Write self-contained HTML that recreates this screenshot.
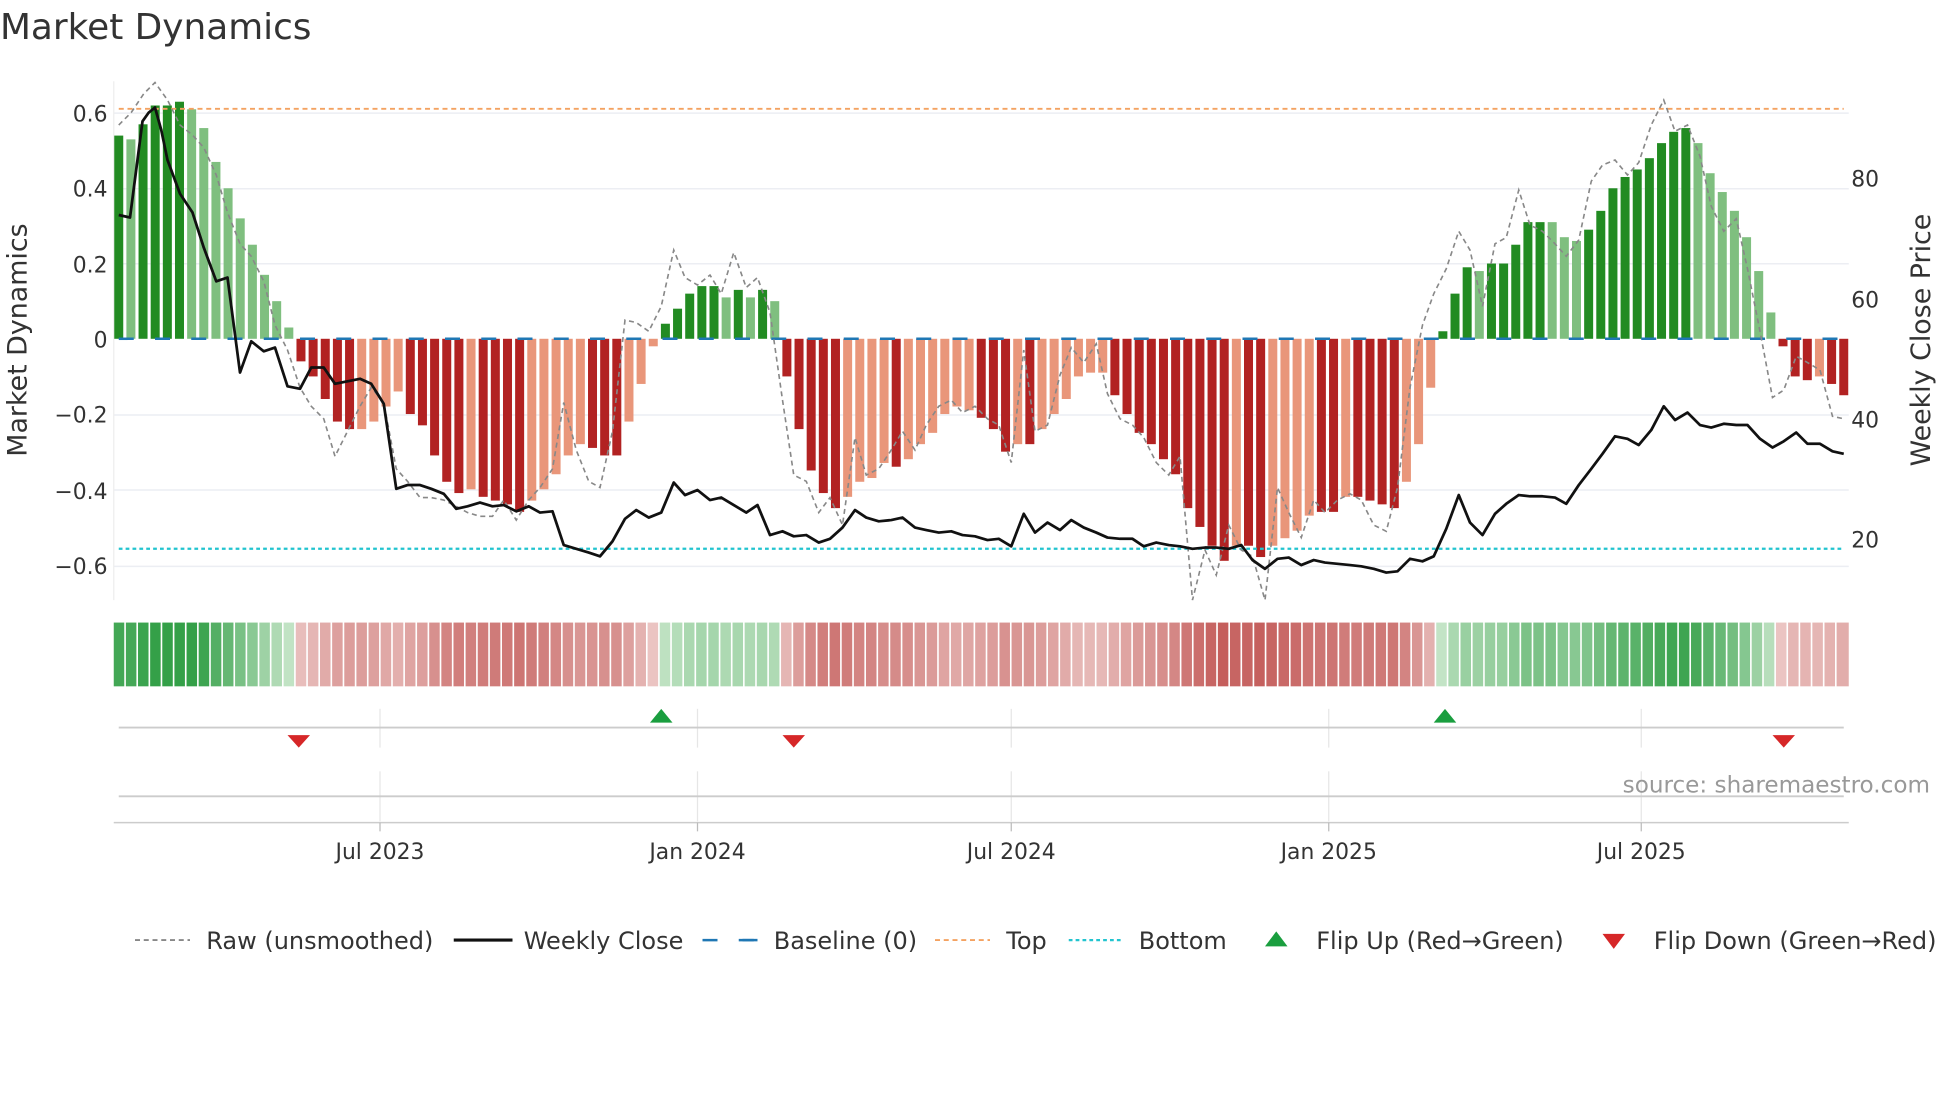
<!DOCTYPE html>
<html><head><meta charset="utf-8"><style>
html,body{margin:0;padding:0;background:#fff;}
svg{display:block;font-family:"DejaVu Sans","Liberation Sans",sans-serif;}
</style></head><body>
<svg id="s" width="1960" height="1102" viewBox="0 0 1568 881.5" preserveAspectRatio="none" xmlns="http://www.w3.org/2000/svg">
<rect width="1568" height="882" fill="#fff"/>
<text x="0" y="31" font-size="28.7" fill="#333">Market Dynamics</text>
<g stroke="#eceef3" stroke-width="1.2">
<line x1="91" x2="1479" y1="90.5" y2="90.5"/><line x1="91" x2="1479" y1="151" y2="151"/>
<line x1="91" x2="1479" y1="211" y2="211"/><line x1="91" x2="1479" y1="332" y2="332"/>
<line x1="91" x2="1479" y1="392" y2="392"/><line x1="91" x2="1479" y1="453" y2="453"/>
</g>
<line x1="91" x2="91" y1="65" y2="480" stroke="#eee" stroke-width="1"/>
<g id="bars"></g>
<line x1="95" x2="1475" y1="87" y2="87" stroke="#f4a261" stroke-width="1.5" stroke-dasharray="4,3"/>
<line x1="95" x2="1475" y1="439" y2="439" stroke="#22c4cf" stroke-width="1.8" stroke-dasharray="3,2.5"/>
<line x1="95" x2="1475" y1="271" y2="271" stroke="#1f77b4" stroke-width="2" stroke-dasharray="12,17"/>
<polyline id="raw" fill="none" stroke="#888" stroke-width="1.3" stroke-dasharray="4,3"/>
<polyline id="px" fill="none" stroke="#111" stroke-width="2.2" stroke-linejoin="round"/>
<g font-size="17.5" fill="#333" text-anchor="end">
<text x="86" y="97">0.6</text><text x="86" y="157">0.4</text><text x="86" y="218">0.2</text>
<text x="86" y="278">0</text><text x="86" y="338">−0.2</text><text x="86" y="399">−0.4</text><text x="86" y="459">−0.6</text>
</g>
<g font-size="17.5" fill="#333">
<text x="1481" y="149">80</text><text x="1481" y="246">60</text><text x="1481" y="342">40</text><text x="1481" y="438">20</text>
</g>
<text transform="translate(21,272) rotate(-90)" font-size="21.5" fill="#333" text-anchor="middle">Market Dynamics</text>
<text transform="translate(1544,272) rotate(-90)" font-size="21.5" fill="#333" text-anchor="middle">Weekly Close Price</text>
<g id="heat"></g>
<g stroke="#e6e6e6" stroke-width="1">
<line x1="304" x2="304" y1="567" y2="598"/><line x1="558" x2="558" y1="567" y2="598"/><line x1="809" x2="809" y1="567" y2="598"/><line x1="1063" x2="1063" y1="567" y2="598"/><line x1="1313" x2="1313" y1="567" y2="598"/>
<line x1="304" x2="304" y1="617" y2="657"/><line x1="558" x2="558" y1="617" y2="657"/><line x1="809" x2="809" y1="617" y2="657"/><line x1="1063" x2="1063" y1="617" y2="657"/><line x1="1313" x2="1313" y1="617" y2="657"/>
</g>
<line x1="95" x2="1475" y1="582" y2="582" stroke="#ccc" stroke-width="1.5"/>
<line x1="95" x2="1475" y1="637" y2="637" stroke="#ccc" stroke-width="1.5"/>
<line x1="91" x2="1479" y1="658" y2="658" stroke="#ccc" stroke-width="1.2"/>
<g stroke="#bbb" stroke-width="1"><line x1="304" x2="304" y1="658" y2="665"/><line x1="558" x2="558" y1="658" y2="665"/><line x1="809" x2="809" y1="658" y2="665"/><line x1="1063" x2="1063" y1="658" y2="665"/><line x1="1313" x2="1313" y1="658" y2="665"/></g>
<g fill="#1a9e3f"><polygon points="520,578 529,567 538,578"/><polygon points="1147,578 1156,567 1165,578"/></g>
<g fill="#d62728"><polygon points="230,588 248,588 239,598"/><polygon points="626,588 644,588 635,598"/><polygon points="1418,588 1436,588 1427,598"/></g>
<text x="1544" y="634" font-size="18.5" fill="#999" text-anchor="end">source: sharemaestro.com</text>
<g font-size="17.5" fill="#333" text-anchor="middle">
<text x="304" y="687">Jul 2023</text><text x="558" y="687">Jan 2024</text><text x="809" y="687">Jul 2024</text><text x="1063" y="687">Jan 2025</text><text x="1313" y="687">Jul 2025</text>
</g>
<g font-size="19.2" fill="#333">
<line x1="108" x2="152" y1="752" y2="752" stroke="#888" stroke-width="1.5" stroke-dasharray="4,3"/>
<text x="165" y="759">Raw (unsmoothed)</text>
<line x1="363" x2="410" y1="752" y2="752" stroke="#111" stroke-width="2.5"/>
<text x="419" y="759">Weekly Close</text>
<line x1="562" x2="606" y1="752" y2="752" stroke="#1f77b4" stroke-width="2" stroke-dasharray="12,17"/>
<line x1="594" x2="606" y1="752" y2="752" stroke="#1f77b4" stroke-width="2"/>
<text x="619" y="759">Baseline (0)</text>
<line x1="748" x2="792" y1="752" y2="752" stroke="#f4a261" stroke-width="1.5" stroke-dasharray="4,3"/>
<text x="805" y="759">Top</text>
<line x1="855" x2="899" y1="752" y2="752" stroke="#22c4cf" stroke-width="1.8" stroke-dasharray="3,2.5"/>
<text x="911" y="759">Bottom</text>
<polygon points="1012,757 1021,745 1030,757" fill="#1a9e3f"/>
<text x="1053" y="759">Flip Up (Red→Green)</text>
<polygon points="1282,747 1300,747 1291,759" fill="#d62728"/>
<text x="1323" y="759">Flip Down (Green→Red)</text>
</g>
</svg>
<script>
var B=[[.54,1],[.53,0],[.57,1],[.62,1],[.62,1],[.63,1],[.61,0],[.56,0],[.47,0],[.40,0],[.32,0],[.25,0],[.17,0],[.10,0],[.03,0],
[-.06,1],[-.1,1],[-.16,1],[-.22,1],[-.24,1],[-.24,0],[-.22,0],[-.18,0],[-.14,0],[-.2,1],[-.23,1],[-.31,1],[-.38,1],[-.41,1],[-.4,0],[-.42,1],[-.43,1],[-.44,1],[-.46,1],[-.43,0],[-.4,0],[-.36,0],[-.31,0],[-.28,0],[-.29,1],[-.31,1],[-.31,1],[-.22,0],[-.12,0],[-.02,0],
[.04,1],[.08,1],[.12,1],[.14,1],[.14,1],[.11,0],[.13,1],[.11,0],[.13,1],[.1,0],
[-.1,1],[-.24,1],[-.35,1],[-.41,1],[-.45,1],[-.42,0],[-.38,0],[-.37,0],[-.33,0],[-.34,1],[-.32,0],[-.28,0],[-.25,0],[-.2,0],[-.18,0],[-.19,0],[-.21,1],[-.24,1],[-.3,1],[-.28,0],[-.28,1],[-.24,0],[-.2,0],[-.16,0],[-.1,0],[-.09,0],[-.09,0],[-.15,1],[-.2,1],[-.25,1],[-.28,1],[-.32,1],[-.36,1],[-.45,1],[-.5,1],[-.55,1],[-.59,1],[-.55,0],[-.55,1],[-.58,1],[-.55,0],[-.53,0],[-.51,0],[-.47,0],[-.46,1],[-.46,1],[-.42,0],[-.42,1],[-.43,1],[-.44,1],[-.45,1],[-.38,0],[-.28,0],[-.13,0],
[.02,1],[.12,1],[.19,1],[.18,0],[.2,1],[.2,1],[.25,1],[.31,1],[.31,1],[.31,0],[.27,0],[.26,0],[.29,1],[.34,1],[.4,1],[.43,1],[.45,1],[.48,1],[.52,1],[.55,1],[.56,1],[.52,0],[.44,0],[.39,0],[.34,0],[.27,0],[.18,0],[.07,0],
[-.02,1],[-.1,1],[-.11,1],[-.1,0],[-.12,1],[-.15,1]];
var n=B.length,x0=95,x1=1475,step=(x1-x0)/(n-1),NS="http://www.w3.org/2000/svg";
var bars=document.getElementById('bars'),heat=document.getElementById('heat');
function mix(a,b,t){return 'rgb('+a.map(function(v,i){return Math.round(v+(b[i]-v)*t)}).join(',')+')';}
var hs=(1479-91)/n;
B.forEach(function(d,i){var v=d[0],x=x0+i*step,y=271-301*v,r=document.createElementNS(NS,'rect');
r.setAttribute('x',x-3.6);r.setAttribute('width',7.2);r.setAttribute('y',Math.min(y,271));r.setAttribute('height',Math.abs(271-y));
r.setAttribute('fill',v>=0?(d[1]?'#228b22':'#7fbf7f'):(d[1]?'#b22222':'#e9967a'));bars.appendChild(r);
var h=document.createElementNS(NS,'rect'),t=Math.min(1,Math.abs(v)/0.6);
h.setAttribute('x',91+i*hs);h.setAttribute('width',i==n-1?hs:hs-1.3);h.setAttribute('y',498);h.setAttribute('height',51);
h.setAttribute('fill',v>=0?mix([200,230,202],[52,160,72],t):mix([236,200,198],[196,92,90],t));heat.appendChild(h);});
var P="95,172 104,174 114,97 119,90 124,86 129,104 134,128 144,155 154,170 163,198 173,225 182,222 192,298 201,273 211,281 220,278 230,309 240,311 249,294 259,294 268,307 278,305 288,303 297,307 307,323 317,391 326,388 336,388 345,391 355,395 365,407 374,405 384,402 394,405 403,404 413,409 423,405 432,410 442,409 451,436 461,439 471,442 480,445 490,433 500,415 509,408 519,414 529,410 539,386 548,396 558,392 568,400 577,398 587,404 597,410 606,404 616,428 626,425 635,429 645,428 655,434 664,431 674,422 684,408 693,414 703,417 713,416 722,414 732,422 741,424 751,426 761,425 770,428 780,429 790,432 799,431 809,437 819,411 828,426 838,418 848,424 857,416 867,422 877,426 886,430 896,431 906,431 915,437 925,434 935,436 944,437 954,439 964,438 973,438 983,439 993,436 1002,448 1012,455 1022,447 1031,446 1041,452 1051,448 1060,450 1070,451 1080,452 1089,453 1099,455 1109,458 1118,457 1128,447 1138,449 1147,445 1157,423 1167,396 1176,418 1186,428 1196,411 1205,403 1215,396 1224,397 1234,397 1244,398 1253,403 1263,388 1273,375 1282,363 1292,349 1302,351 1311,356 1321,344 1331,325 1340,336 1350,330 1360,340 1369,342 1379,339 1389,340 1398,340 1408,351 1418,358 1427,353 1437,346 1446,355 1456,355 1466,361 1475,363";
document.getElementById('px').setAttribute('points',P);
var R="95,100 105,90 115,75 124,66 134,80 144,100 154,108 163,118 173,140 182,170 192,195 201,205 211,225 220,260 230,280 240,310 249,325 259,335 268,365 278,345 288,325 297,310 307,322 317,375 326,385 336,398 345,398 355,400 365,405 374,410 384,413 394,413 403,400 413,416 423,400 432,390 442,375 451,322 461,360 471,385 480,390 490,345 500,256 509,258 519,265 529,245 539,200 548,222 558,228 568,220 577,235 587,202 597,230 606,222 616,250 626,320 635,380 645,385 655,410 664,398 674,420 684,350 693,380 703,375 713,360 722,345 732,360 741,340 751,325 761,320 770,330 780,325 790,335 799,340 809,370 819,280 828,345 838,340 848,300 857,278 867,290 877,275 886,315 896,335 906,340 915,350 925,370 935,380 944,365 954,480 964,440 973,460 983,420 993,440 1002,445 1012,480 1022,390 1031,410 1041,430 1051,400 1060,410 1070,400 1080,395 1089,400 1099,420 1109,425 1118,390 1128,310 1138,260 1147,235 1157,215 1167,185 1176,200 1186,245 1196,195 1205,190 1215,152 1224,180 1234,185 1244,195 1253,205 1263,192 1273,145 1282,132 1292,128 1302,140 1311,130 1321,100 1331,80 1340,105 1350,100 1360,125 1369,165 1379,185 1389,175 1398,215 1408,265 1418,318 1427,312 1437,285 1446,290 1456,296 1466,333 1475,335";
document.getElementById('raw').setAttribute('points',R);
</script>
</body></html>
